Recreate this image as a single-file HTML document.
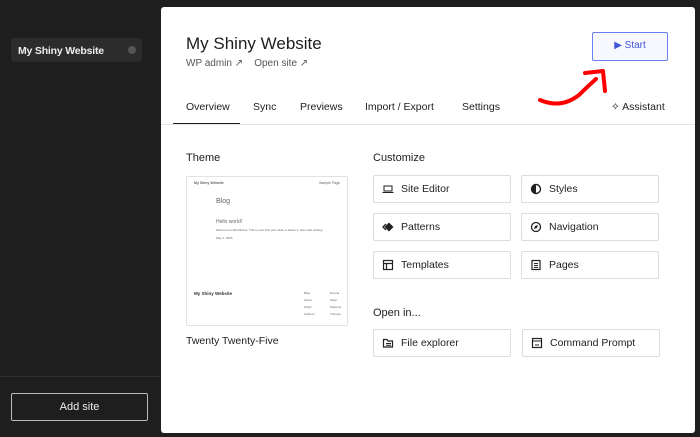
<!DOCTYPE html><html><head><style>
*{box-sizing:border-box;margin:0;padding:0}
body{width:700px;height:437px;background:#1e1e1e;font-family:"Liberation Sans",sans-serif;position:relative;overflow:hidden;color:#1e1e1e}
.side-item{position:absolute;left:11px;top:38px;width:131px;height:24px;background:#2c2c2c;border-radius:3px;color:#eee;font-size:10.5px;font-weight:bold;padding:7px 7px;letter-spacing:-0.2px}
.dot{position:absolute;right:6px;top:8px;width:8px;height:8px;border-radius:50%;background:#555}
.hr{position:absolute;left:0;top:376px;width:160px;height:1px;background:#2f2f2f}
.add{position:absolute;left:11px;top:393px;width:137px;height:28px;border:1px solid #bbb;border-radius:2px;color:#eee;font-size:11px;text-align:center;line-height:26px}
.panel{position:absolute;left:161px;top:7px;width:534px;height:426px;background:#fff;border-radius:3px}
.a{position:absolute;white-space:nowrap}
.btn{position:absolute;width:138px;height:28px;border:1px solid #ddd;border-radius:2px;font-size:10.5px;padding:0 0 0 27px;line-height:26px}
.btn svg{position:absolute;left:8px;top:7px}
.tab{font-size:10.5px;top:94px}
</style></head><body>
<div class="side-item">My Shiny Website<span class="dot"></span></div>
<div class="hr"></div>
<div class="add">Add site</div>
<div class="panel">
<div class="a" style="left:25px;top:27px;font-size:17px">My Shiny Website</div>
<div class="a" style="left:25px;top:51px;font-size:10px;color:#555">WP admin ↗&nbsp;&nbsp;&nbsp; Open site ↗</div>
<div class="a" style="left:431px;top:25px;width:76px;height:29px;border:1.5px solid #6b80f0;border-radius:2px;background:#f8f8ff;color:#4055d8;font-size:10px;text-align:center;line-height:26px">▶ Start</div>
<svg class="a" style="left:370px;top:50px" width="80" height="55"><path d="M9 43 Q30 52 48 38 Q56 30 65 22" stroke="#f00" stroke-width="4" fill="none" stroke-linecap="round"/><path d="M54 16 L72 14 L74 34" stroke="#f00" stroke-width="4" fill="none" stroke-linecap="round" stroke-linejoin="round"/></svg>
<div class="a tab" style="left:25px">Overview</div>
<div class="a tab" style="left:92px">Sync</div>
<div class="a tab" style="left:139px">Previews</div>
<div class="a tab" style="left:204px">Import / Export</div>
<div class="a tab" style="left:301px">Settings</div>
<div class="a tab" style="left:450px">✧ Assistant</div>
<div class="a" style="left:12px;top:116px;width:67px;height:2px;background:#1e1e1e"></div>
<div class="a" style="left:0;top:117px;width:534px;height:1px;background:#e5e5e5"></div>
<div class="a" style="left:25px;top:145px;font-size:11px">Theme</div>
<div class="a" style="left:25px;top:169px;width:162px;height:150px;border:1px solid #e2e2e2;border-radius:2px;color:#666">
<div class="a" style="left:7px;top:4px;font-size:3.5px;font-weight:bold">My Shiny Website</div>
<div class="a" style="right:7px;top:4px;font-size:3.5px">Sample Page</div>
<div class="a" style="left:29px;top:21px;font-size:7px">Blog</div>
<div class="a" style="left:29px;top:42px;font-size:5px">Hello world!</div>
<div class="a" style="left:29px;top:51px;font-size:3px">Welcome to WordPress. This is your first post. Edit or delete it, then start writing!</div>
<div class="a" style="left:29px;top:59px;font-size:3px">May 1, 2025</div>
<div class="a" style="left:7px;top:114px;font-size:4.5px;font-weight:bold;color:#333">My Shiny Website</div>
<div class="a" style="left:117px;top:113px;font-size:3px;line-height:7px">Blog<br>About<br>FAQs<br>Authors</div>
<div class="a" style="left:143px;top:113px;font-size:3px;line-height:7px">Events<br>Shop<br>Patterns<br>Themes</div>
</div>
<div class="a" style="left:25px;top:328px;font-size:10.5px">Twenty Twenty-Five</div>
<div class="a" style="left:212px;top:145px;font-size:11px">Customize</div>
<div class="btn" style="left:212px;top:168px"><svg width="12" height="12"><path d="M2 3h8v5H2zM0.5 9.5h11" stroke="#222" fill="none"/></svg>Site Editor</div>
<div class="btn" style="left:360px;top:168px"><svg width="12" height="12"><circle cx="6" cy="6" r="4.5" stroke="#222" fill="none" stroke-width="1.4"/><path d="M6 1.5a4.5 4.5 0 0 0 0 9z" fill="#222"/></svg>Styles</div>
<div class="btn" style="left:212px;top:206px"><svg width="12" height="12"><path d="M7 1.5L11.5 6 7 10.5 2.5 6z" fill="#222"/><path d="M4 3L1 6l3 3" stroke="#222" fill="none" stroke-width="1.3"/></svg>Patterns</div>
<div class="btn" style="left:360px;top:206px"><svg width="12" height="12"><circle cx="6" cy="6" r="4.5" stroke="#222" fill="none" stroke-width="1.3"/><path d="M4 8l1-3 3-1-1 3z" fill="#222"/></svg>Navigation</div>
<div class="btn" style="left:212px;top:244px"><svg width="12" height="12"><rect x="1.5" y="1.5" width="9" height="9" stroke="#222" fill="none" stroke-width="1.2"/><path d="M1.5 4.5h9M4.5 4.5v6" stroke="#222" stroke-width="1.2"/></svg>Templates</div>
<div class="btn" style="left:360px;top:244px"><svg width="12" height="12"><rect x="2" y="1.5" width="8" height="9" stroke="#222" fill="none" stroke-width="1.2"/><path d="M4 4.5h4M4 6.5h4M4 8.5h4" stroke="#222"/></svg>Pages</div>
<div class="a" style="left:212px;top:300px;font-size:11px">Open in...</div>
<div class="btn" style="left:212px;top:322px"><svg width="12" height="12"><path d="M1.5 2.5h3.5l1 1.5h4.5v6H1.5z" stroke="#222" fill="none" stroke-width="1.2"/><path d="M4 6.5h5M4 8.3h5" stroke="#222"/></svg>File explorer</div>
<div class="btn" style="left:361px;top:322px"><svg width="12" height="12"><rect x="1.5" y="1.5" width="9" height="9" stroke="#222" fill="none" stroke-width="1.2"/><path d="M1.5 4h9M4 8h4" stroke="#222"/></svg>Command Prompt</div>
</div>
</body></html>
